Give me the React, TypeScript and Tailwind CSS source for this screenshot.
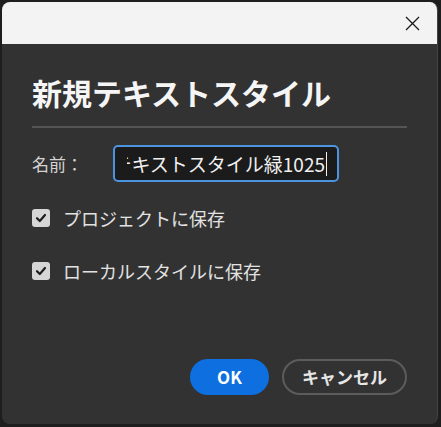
const font = { fontFamily: '"Noto Sans CJK JP", "Noto Sans", sans-serif' };

const CheckRow = ({ label }: { label: string }) => (
  <div className="flex items-center h-[24px]">
    <div className="w-[18px] h-[18px] rounded-[3px] bg-[#d6d6d6] flex items-center justify-center">
      <svg width="12" height="12" viewBox="0 0 12 12">
        <polyline points="2,6.2 4.8,9 10,3" fill="none" stroke="#1e1e1e" strokeWidth="2.2" strokeLinecap="round" strokeLinejoin="round" />
      </svg>
    </div>
    <span className="ml-[13px] text-[18px] text-[#e2e2e2]">{label}</span>
  </div>
);

export default function App() {
  return (
    <div className="w-[441px] h-[427px] bg-[#1e1e1e] pt-[2px] pl-[2px] pr-[3px] pb-[3px]" style={font}>
      <div className="h-full flex flex-col rounded-[8px] overflow-hidden bg-[#323232] border-r border-[#444]">
        {/* title bar */}
        <div className="h-[42px] bg-[#f3f3f3] flex items-center justify-end pr-[17px]">
          <svg width="15" height="15" viewBox="0 0 15 15">
            <path d="M1 1L14 14M14 1L1 14" stroke="#1a1a1a" strokeWidth="1.3" />
          </svg>
        </div>

        <div className="flex-1 flex flex-col px-[30px]">
          <h1 className="mt-[28px] text-[30px] leading-[40px] font-bold text-[#f5f5f5]">
            新規テキストスタイル
          </h1>
          <div className="mt-[14px] h-[2px] bg-[#555555]" />

          {/* name */}
          <div className="mt-[17px] flex items-center">
            <span className="w-[81px] text-[17px] text-[#d4d4d4]">名前：</span>
            <div className="w-[226px] h-[37px] rounded-[5px] border-2 border-[#4d94e0] bg-[#1b1b1b] pl-[12px] pr-[10px] flex items-center">
              <div className="flex-1 overflow-hidden flex justify-end whitespace-nowrap">
                <span className="text-[19px] leading-[24px] text-[#f0f0f0] border-r border-[#f0f0f0] pr-[1px] shrink-0">
                  テキストスタイル緑1025
                </span>
              </div>
            </div>
          </div>

          <div className="mt-[24px] flex flex-col gap-[29px]">
            <CheckRow label="プロジェクトに保存" />
            <CheckRow label="ローカルスタイルに保存" />
          </div>

          {/* buttons */}
          <div className="mt-auto mb-[29px] flex justify-end gap-[13px]">
            <button className="w-[79px] h-[36px] rounded-full bg-[#0d6fe0] text-white text-[17px] font-bold">
              OK
            </button>
            <button className="w-[125px] h-[36px] rounded-full border-2 border-[#5c5c5c] text-[#e6e6e6] text-[17px] font-bold">
              キャンセル
            </button>
          </div>
        </div>
      </div>
    </div>
  );
}
